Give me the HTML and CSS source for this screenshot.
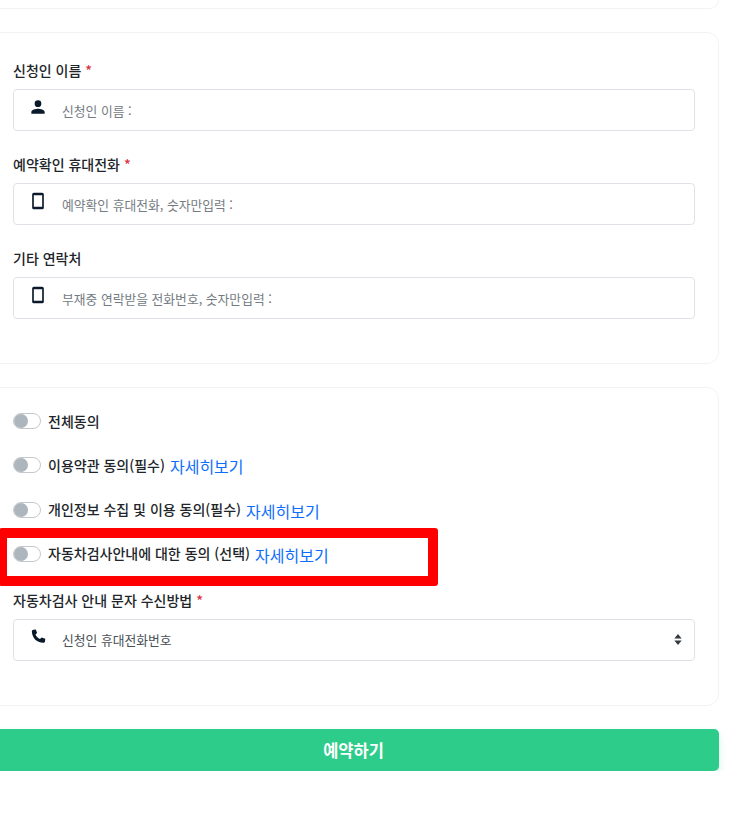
FILE: index.html
```html
<!DOCTYPE html>
<html lang="ko">
<head>
    <meta charset="UTF-8">
    <meta name="viewport" content="width=device-width, initial-scale=1.0">
    <title>예약하기</title>
    <link rel="stylesheet" href="styles.css">
</head>
<body>

    <div class="page">
        <!-- 이전 카드 (아랫부분만 보임) -->
        <div class="card card-top"></div>

        <!-- 연락처 -->
        <div class="card card-contact">
            <div class="field">
                <label>신청인 이름 <span class="req">*</span></label>
                <div class="input-box">
                    <svg class="icon" viewBox="0 0 24 24"><path d="M12 12a4 4 0 1 0 0-8 4 4 0 0 0 0 8zm0 2c-2.700 0-8 1.300-8 4v2h16v-2c0-2.700-5.300-4-8-4z"/></svg>
                    <input type="text" placeholder="신청인 이름 :">
                </div>
            </div>
            <div class="field">
                <label>예약확인 휴대전화 <span class="req">*</span></label>
                <div class="input-box">
                    <svg class="icon" viewBox="0 0 24 24"><path fill-rule="evenodd" d="M7 2h10a2 2 0 0 1 2 2v16a2 2 0 0 1-2 2H7a2 2 0 0 1-2-2V4a2 2 0 0 1 2-2zm0 3v14h10V5z"/></svg>
                    <input type="text" placeholder="예약확인 휴대전화, 숫자만입력 :">
                </div>
            </div>
            <div class="field">
                <label>기타 연락처</label>
                <div class="input-box">
                    <svg class="icon" viewBox="0 0 24 24"><path fill-rule="evenodd" d="M7 2h10a2 2 0 0 1 2 2v16a2 2 0 0 1-2 2H7a2 2 0 0 1-2-2V4a2 2 0 0 1 2-2zm0 3v14h10V5z"/></svg>
                    <input type="text" placeholder="부재중 연락받을 전화번호, 숫자만입력 :">
                </div>
            </div>
        </div>

        <!-- 약관 동의 -->
        <div class="card card-agree">
            <div class="agree-row">
                <span class="switch"></span>
                <span class="agree-text">전체동의</span>
            </div>
            <div class="agree-row">
                <span class="switch"></span>
                <span class="agree-text">이용약관 동의(필수)</span>
                <a class="more" href="#">자세히보기</a>
            </div>
            <div class="agree-row">
                <span class="switch"></span>
                <span class="agree-text">개인정보 수집 및 이용 동의(필수)</span>
                <a class="more" href="#">자세히보기</a>
            </div>
            <div class="agree-row marked">
                <span class="switch"></span>
                <span class="agree-text">자동차검사안내에 대한 동의 (선택)</span>
                <a class="more" href="#">자세히보기</a>
                <span class="red-box"></span>
            </div>
            <div class="field field-last">
                <label>자동차검사 안내 문자 수신방법 <span class="req">*</span></label>
                <div class="input-box">
                    <svg class="icon" viewBox="0 0 24 24"><path d="M6.600 3.200 9.400 3l1.500 4.200-1.900 1.900c1 2.400 3 4.400 5.400 5.400l1.900-1.900 4.400 1.600-.2 2.900c-.1 1.100-1 2-2 1.900C10 18.500 5 13.400 4.600 5.200c0-1 .9-1.900 2-2z"/></svg>
                    <select>
                        <option>신청인 휴대전화번호</option>
                    </select>
                    <svg class="arrows" viewBox="0 0 8 12"><path d="M4 0 8 5H0zM4 12 0 7h8z"/></svg>
                </div>
            </div>
        </div>

        <button class="button">예약하기</button>
    </div>

</body>
</html>
```

FILE: styles.css
```css
body {
    font-family: "Noto Sans CJK KR", "Noto Sans", sans-serif;
    margin: 0;
    background-color: #fff;
    color: #212529;
    overflow: hidden;
}

.page {
    width: 731px;
    margin-left: -12px;
}

.card {
    box-sizing: border-box;
    background-color: #fff;
    border: 1px solid #f3f3f3;
    border-radius: 12px;
    margin-bottom: 23px;
    padding: 0 23px 0 24px;
}

.card-top {
    height: 9px;
    border-top: none;
    border-radius: 0 0 12px 12px;
}

.card-contact {
    height: 332px;
    padding-top: 25px;
}

.card-agree {
    height: 319px;
    padding-top: 20px;
}

.field {
    margin-bottom: 21px;
}

.field-last {
    margin-bottom: 0;
}

label {
    display: block;
    height: 24px;
    line-height: 24px;
    margin-bottom: 7px;
    font-size: 14px;
    font-weight: 500;
    color: #212529;
}

.req {
    color: #dc3545;
}

.input-box {
    box-sizing: border-box;
    display: flex;
    align-items: center;
    height: 42px;
    border: 1px solid #dee2e6;
    border-radius: 4px;
    background-color: #fff;
}

.icon {
    flex: none;
    width: 20px;
    height: 20px;
    margin: -6px 0 0 14px;
    fill: #0b1a2b;
}

.input-box input,
.input-box select {
    flex: 1;
    min-width: 0;
    height: 100%;
    padding: 0 0 0 14px;
    border: none;
    outline: none;
    appearance: none;
    background: transparent;
    font-family: inherit;
    font-size: 12.8px;
    color: #495057;
}

.input-box input::placeholder {
    color: #757b82;
    opacity: 1;
}

.arrows {
    flex: none;
    width: 8px;
    height: 11px;
    margin-right: 12px;
    fill: #343a40;
}

.agree-row {
    position: relative;
    display: flex;
    align-items: center;
    height: 28px;
    margin-bottom: 16.3px;
}

.marked {
    margin-bottom: 19px;
}

.switch {
    box-sizing: border-box;
    flex: none;
    width: 28px;
    height: 16px;
    margin-right: 7px;
    margin-top: -2px;
    border: 1px solid #c4c8cc;
    border-radius: 8px;
    background-color: #fff;
}

.switch::before {
    content: "";
    display: block;
    width: 14px;
    height: 14px;
    border-radius: 50%;
    background-color: #adb5bd;
}

.agree-text {
    font-size: 14px;
    font-weight: 500;
    margin-top: -3px;
}

.more {
    margin-left: 5px;
    font-size: 16px;
    color: #0d6efd;
    text-decoration: none;
}

/* 스크린샷에 덧그려진 빨간 표시 */
.red-box {
    position: absolute;
    left: -14px;
    top: -13px;
    width: 421px;
    height: 38px;
    border: 10px solid #f00;
    border-left-width: 8px;
    border-radius: 3px;
}

.button {
    display: block;
    width: 100%;
    height: 42px;
    border: none;
    border-radius: 5px;
    background-color: #2ecc8b;
    box-shadow: 0 4px 8px rgba(46, 204, 139, 0.2);
    color: #fff;
    font-family: inherit;
    font-size: 16.5px;
    font-weight: 700;
}
```
